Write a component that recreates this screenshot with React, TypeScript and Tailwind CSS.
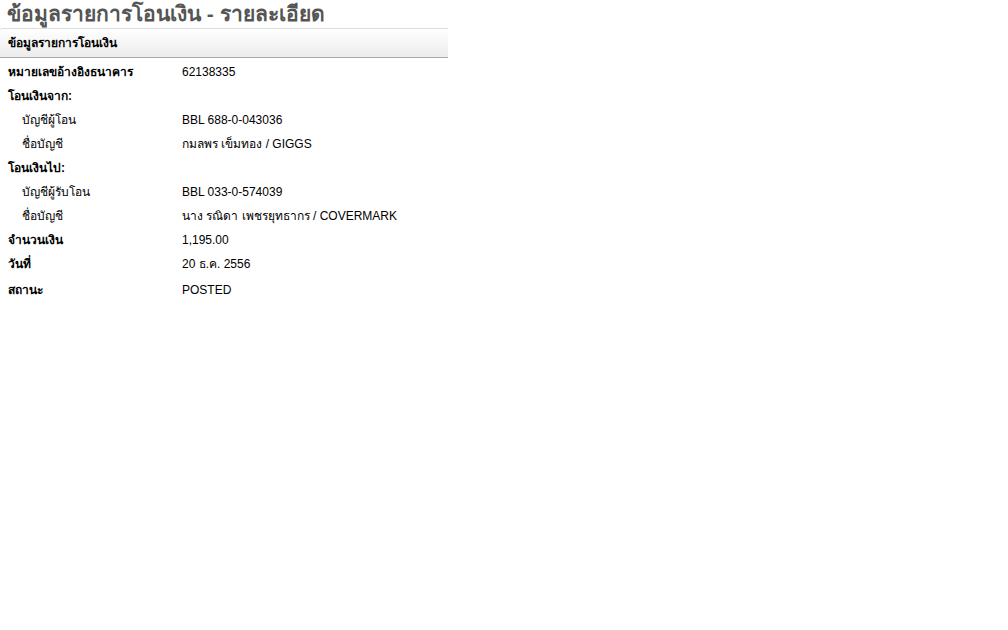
export default function App() {
  const rows: { label: string; value?: string; sub?: boolean; h?: string }[] = [
    { label: "หมายเลขอ้างอิงธนาคาร", value: "62138335" },
    { label: "โอนเงินจาก:" },
    { label: "บัญชีผู้โอน", value: "BBL 688-0-043036", sub: true },
    { label: "ชื่อบัญชี", value: "กมลพร เข็มทอง / GIGGS", sub: true },
    { label: "โอนเงินไป:" },
    { label: "บัญชีผู้รับโอน", value: "BBL 033-0-574039", sub: true },
    { label: "ชื่อบัญชี", value: "นาง รณิดา เพชรยุทธากร / COVERMARK", sub: true },
    { label: "จำนวนเงิน", value: "1,195.00" },
    { label: "วันที่", value: "20 ธ.ค. 2556" },
    { label: "สถานะ", value: "POSTED", h: "h-[28px]" },
  ];

  return (
    <div className="min-h-screen w-full bg-white text-black" style={{ fontFamily: "Tahoma, 'Liberation Sans', 'DejaVu Sans', sans-serif" }}>
      <h1 className="px-[7px] pt-[1px] text-[21px] font-bold leading-[26px] text-[#555555]">
        ข้อมูลรายการโอนเงิน - รายละเอียด
      </h1>
      <div className="mt-[1px] w-[448px] rounded-tl-[3px] border-t border-b border-t-[#dcdcdc] border-b-[#a8a8a8] bg-gradient-to-b from-white to-[#ececec] px-[8px] h-[30px] flex items-center">
        <span className="text-[12px] font-bold">ข้อมูลรายการโอนเงิน</span>
      </div>
      <div className="pt-[2px]">
        {rows.map((r, i) => (
          <div key={i} className={`flex items-center text-[12px] ${r.h ?? "h-[24px]"}`}>
            <div className={`w-[182px] ${r.sub ? "pl-[22px]" : "pl-[8px] font-bold"}`}>{r.label}</div>
            <div>{r.value}</div>
          </div>
        ))}
      </div>
    </div>
  );
}
